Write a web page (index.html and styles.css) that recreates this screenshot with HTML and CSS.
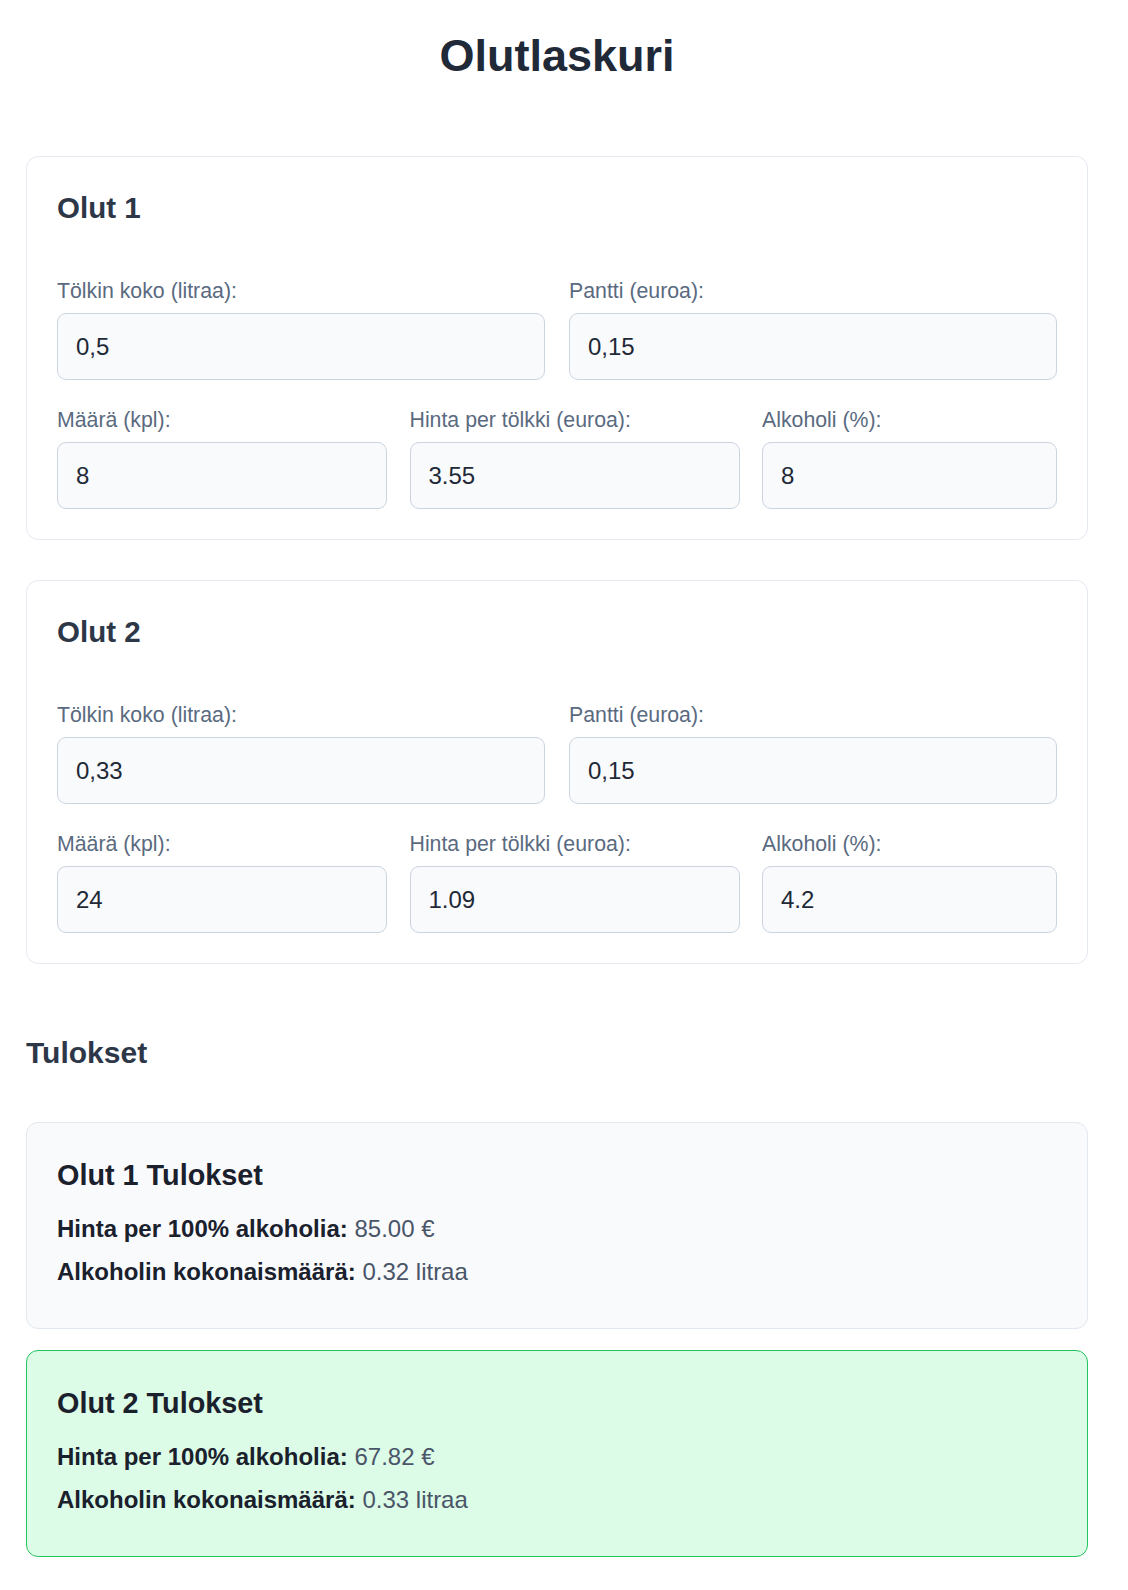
FILE: index.html
```html
<!DOCTYPE html>
<html lang="fi">
<head>
<meta charset="utf-8">
<title>Olutlaskuri</title>
<link rel="stylesheet" href="styles.css">
</head>
<body>
<div class="page">
  <h1 class="title">Olutlaskuri</h1>

  <section class="card">
    <h2 class="card-title">Olut 1</h2>
    <div class="row row-two">
      <div class="field">
        <label class="label">Tölkin koko (litraa):</label>
        <input class="input" type="text" value="0,5">
      </div>
      <div class="field">
        <label class="label">Pantti (euroa):</label>
        <input class="input" type="text" value="0,15">
      </div>
    </div>
    <div class="row row-three">
      <div class="field">
        <label class="label">Määrä (kpl):</label>
        <input class="input" type="text" value="8">
      </div>
      <div class="field">
        <label class="label">Hinta per tölkki (euroa):</label>
        <input class="input" type="text" value="3.55">
      </div>
      <div class="field">
        <label class="label">Alkoholi (%):</label>
        <input class="input" type="text" value="8">
      </div>
    </div>
  </section>

  <section class="card">
    <h2 class="card-title">Olut 2</h2>
    <div class="row row-two">
      <div class="field">
        <label class="label">Tölkin koko (litraa):</label>
        <input class="input" type="text" value="0,33">
      </div>
      <div class="field">
        <label class="label">Pantti (euroa):</label>
        <input class="input" type="text" value="0,15">
      </div>
    </div>
    <div class="row row-three">
      <div class="field">
        <label class="label">Määrä (kpl):</label>
        <input class="input" type="text" value="24">
      </div>
      <div class="field">
        <label class="label">Hinta per tölkki (euroa):</label>
        <input class="input" type="text" value="1.09">
      </div>
      <div class="field">
        <label class="label">Alkoholi (%):</label>
        <input class="input" type="text" value="4.2">
      </div>
    </div>
  </section>

  <h2 class="section-title">Tulokset</h2>

  <div class="results">
    <section class="result">
      <h3 class="result-title">Olut 1 Tulokset</h3>
      <p class="result-line"><strong>Hinta per 100% alkoholia:</strong> 85.00 €</p>
      <p class="result-line"><strong>Alkoholin kokonaismäärä:</strong> 0.32 litraa</p>
    </section>
    <section class="result result-best">
      <h3 class="result-title">Olut 2 Tulokset</h3>
      <p class="result-line"><strong>Hinta per 100% alkoholia:</strong> 67.82 €</p>
      <p class="result-line"><strong>Alkoholin kokonaismäärä:</strong> 0.33 litraa</p>
    </section>
  </div>
</div>
</body>
</html>
```
FILE: styles.css
```css
* {
  box-sizing: border-box;
}

html, body {
  margin: 0;
  padding: 0;
  background: #ffffff;
}

body {
  font-family: "Liberation Sans", Arial, sans-serif;
  font-size: 24px;
  color: #1f2937;
}

.page {
  width: 1062px;
  margin: 0 0 0 26px;
  padding: 29px 0 30px;
}

.title {
  margin: 0 0 73px;
  font-size: 45px;
  line-height: 54px;
  font-weight: 700;
  text-align: center;
  color: #1f2937;
}

.card {
  border: 1px solid #e5e9f0;
  border-radius: 12px;
  padding: 30px;
  background: #ffffff;
  margin-bottom: 40px;
}

.card-title {
  margin: 0 0 50px;
  font-size: 29.5px;
  line-height: 42px;
  font-weight: 700;
  color: #2d3748;
}

.row {
  display: grid;
}

.row + .row {
  margin-top: 28px;
}

.row-two {
  grid-template-columns: 1fr 1fr;
  column-gap: 24px;
}

.row-three {
  grid-template-columns: 330px 330px 1fr;
  column-gap: 22.5px;
}

.field {
  display: flex;
  flex-direction: column;
  min-width: 0;
}

.label {
  display: block;
  font-size: 21.3px;
  line-height: 24px;
  margin-bottom: 10px;
  color: #5a6a80;
}

.input {
  display: block;
  width: 100%;
  height: 67px;
  padding: 0 18px;
  border: 1px solid #cbd5e1;
  border-radius: 9px;
  background: #f8fafc;
  font-family: "Liberation Sans", Arial, sans-serif;
  font-size: 24px;
  color: #1f2937;
  outline: none;
}

.section-title {
  margin: 68px 0 48px;
  font-size: 30px;
  line-height: 42px;
  font-weight: 700;
  color: #2d3748;
}

.results {
  display: flex;
  flex-direction: column;
  gap: 21px;
}

.result {
  border: 1px solid #e2e8f0;
  border-radius: 12px;
  padding: 30px;
  background: #f8fafc;
}

.result-best {
  background: #dcfce7;
  border-color: #22c55e;
}

.result-title {
  margin: 0 0 14px;
  font-size: 28.8px;
  line-height: 44px;
  font-weight: 700;
  color: #1a202c;
}

.result-line {
  margin: 0 0 7px;
  font-size: 24px;
  line-height: 36px;
  color: #4a5568;
}

.result-line:last-child {
  margin-bottom: 8px;
}

.result-line strong {
  color: #1a202c;
  font-weight: 700;
}
```
